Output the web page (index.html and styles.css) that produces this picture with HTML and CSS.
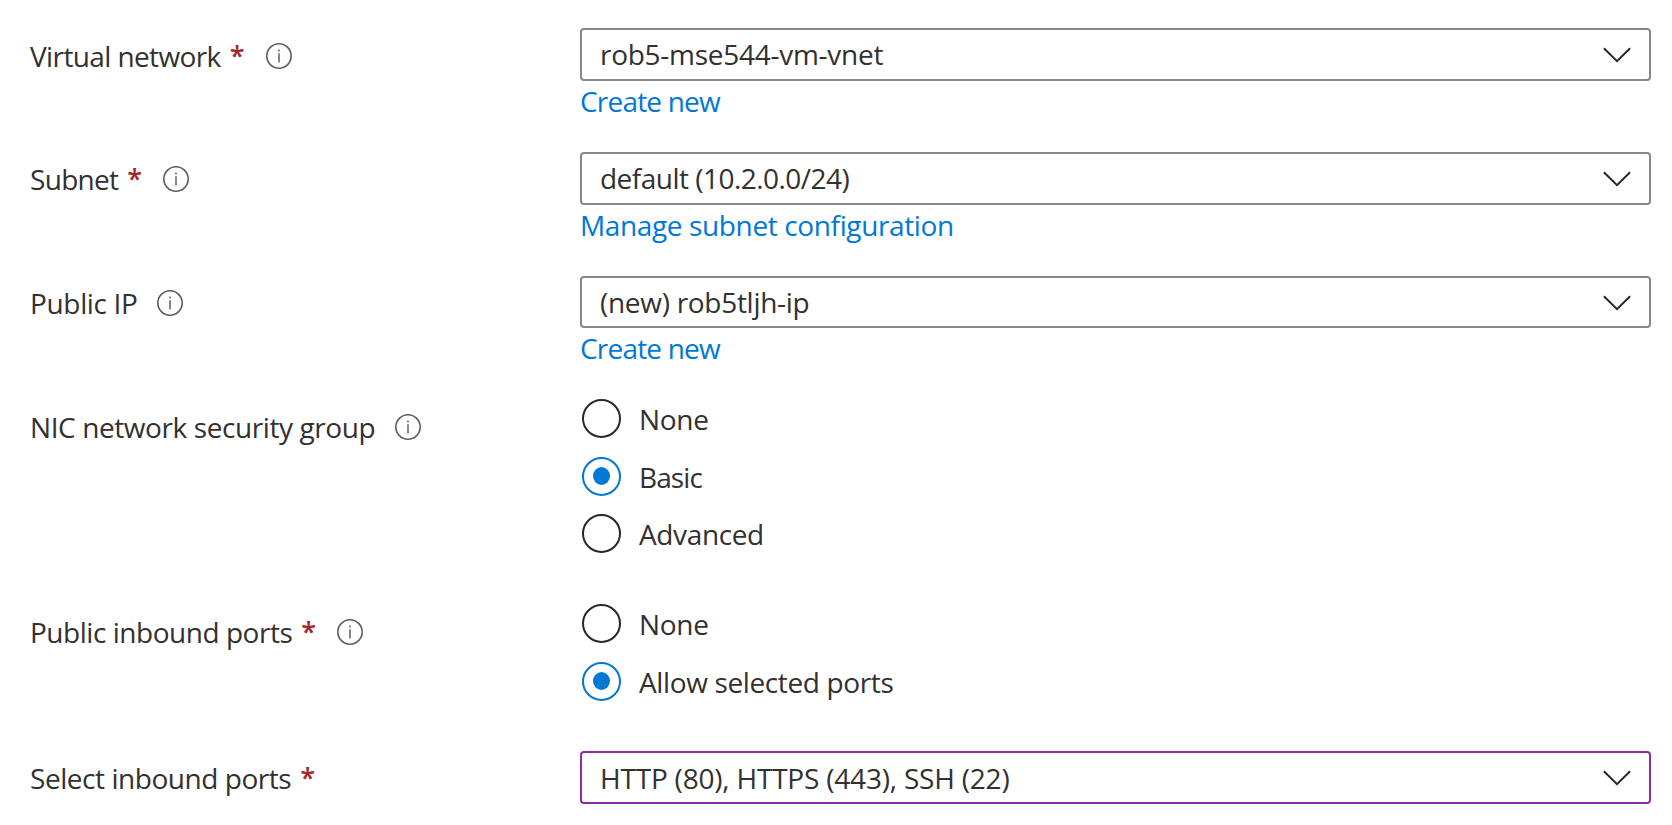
FILE: index.html
```
<!DOCTYPE html>
<html lang="en">
<head>
<meta charset="utf-8">
<title>Networking</title>
<link rel="stylesheet" href="styles.css">
</head>
<body>
<svg class="sprite" width="0" height="0">
  <symbol id="info" viewBox="0 0 26 26"><circle cx="13" cy="13" r="12.2" fill="none" stroke="#605e5c" stroke-width="1.6"/><path d="M13 10.2V19.4M13 6.6V8.4" stroke="#605e5c" stroke-width="1.5" fill="none"/></symbol>
  <symbol id="chevron" viewBox="0 0 28 16"><path d="M.9 1.2 14 14.1 27.1 1.2" fill="none" stroke="#292827" stroke-width="2"/></symbol>
</svg>
<form class="form">
  <div class="row row-vnet">
    <div class="label"><span class="text t-vnet">Virtual network</span><span class="star">*</span><svg class="info"><use href="#info"/></svg></div>
    <div class="field">
      <div class="select"><span class="text v-vnet">rob5-mse544-vm-vnet</span><svg class="chevron"><use href="#chevron"/></svg></div>
      <a class="link text l-create">Create new</a>
    </div>
  </div>
  <div class="row row-subnet">
    <div class="label"><span class="text t-subnet">Subnet</span><span class="star">*</span><svg class="info"><use href="#info"/></svg></div>
    <div class="field">
      <div class="select"><span class="text v-subnet">default (10.2.0.0/24)</span><svg class="chevron"><use href="#chevron"/></svg></div>
      <a class="link text l-manage">Manage subnet configuration</a>
    </div>
  </div>
  <div class="row row-ip">
    <div class="label"><span class="text t-ip">Public IP</span><svg class="info"><use href="#info"/></svg></div>
    <div class="field">
      <div class="select"><span class="text v-ip">(new) rob5tljh-ip</span><svg class="chevron"><use href="#chevron"/></svg></div>
      <a class="link text l-create">Create new</a>
    </div>
  </div>
  <div class="row row-nic">
    <div class="label"><span class="text t-nic">NIC network security group</span><svg class="info"><use href="#info"/></svg></div>
    <div class="field radios">
      <div class="option"><span class="radio"></span><span class="text o-none">None</span></div>
      <div class="option"><span class="radio checked"></span><span class="text o-basic">Basic</span></div>
      <div class="option"><span class="radio"></span><span class="text o-adv">Advanced</span></div>
    </div>
  </div>
  <div class="row row-public">
    <div class="label"><span class="text t-public">Public inbound ports</span><span class="star">*</span><svg class="info"><use href="#info"/></svg></div>
    <div class="field radios">
      <div class="option"><span class="radio"></span><span class="text o-none">None</span></div>
      <div class="option"><span class="radio checked"></span><span class="text o-allow">Allow selected ports</span></div>
    </div>
  </div>
  <div class="row row-select">
    <div class="label"><span class="text t-select">Select inbound ports</span><span class="star">*</span></div>
    <div class="field">
      <div class="select active"><span class="text v-ports">HTTP (80), HTTPS (443), SSH (22)</span><svg class="chevron"><use href="#chevron"/></svg></div>
    </div>
  </div>
</form>
</body>
</html>
```
FILE: styles.css
```
* { box-sizing: border-box; }
body {
  margin: 0;
  background: #fff;
  color: #323130;
  font-family: "Open Sans", "Noto Sans", sans-serif;
  font-size: 28px;
  line-height: 40px;
}
.sprite { position: absolute; }
.form { padding-top: 28px; }
.row {
  display: grid;
  grid-template-columns: 550px 1071px;
  padding-left: 30px;
}
.row-vnet, .row-subnet { height: 124px; }
.row-ip { height: 123px; }
.row-nic { height: 205px; }
.row-public { height: 147px; }
.label {
  display: flex;
  align-items: flex-start;
  padding-top: 8px;
}
.row-subnet .label, .row-ip .label, .row-select .label { padding-top: 7px; }
.text { white-space: nowrap; }

/* Tracking per string */
.t-vnet { letter-spacing: -.61px; }
.t-subnet { letter-spacing: -.7px; }
.t-ip { letter-spacing: -.34px; }
.t-nic { letter-spacing: -.41px; }
.t-public { letter-spacing: -.47px; }
.t-select { letter-spacing: -.45px; }
.v-vnet { letter-spacing: -.27px; }
.v-subnet { letter-spacing: -.52px; }
.v-ip { letter-spacing: -.29px; }
.v-ports { letter-spacing: -.2px; }
.l-create { letter-spacing: -.8px; }
.l-manage { letter-spacing: -.37px; }
.o-none { letter-spacing: -.3px; }
.o-basic { letter-spacing: -.9px; }
.o-adv, .o-allow { letter-spacing: -.37px; }

.star {
  width: 15px;
  margin-left: 9px;
  color: #a4262c;
  font-size: 27px;
  font-weight: 600;
}
.info {
  width: 26px;
  height: 26px;
  margin: 7px 0 0 19.5px;
}
.star + .info { margin-left: 21px; }
.select {
  display: flex;
  justify-content: space-between;
  height: 53px;
  padding: 4px 18px 0 18px;
  border: 2px solid #8a8886;
  border-radius: 4px;
}
.select.active {
  padding-top: 5px;
  border-color: #8a2da5;
}
.row-ip .select { height: 52px; }
.chevron {
  width: 28px;
  height: 16px;
  margin-top: 13px;
}
.active .chevron { margin-top: 12px; }
.link {
  display: block;
  width: max-content;
  color: #0078d4;
}
.radios { padding-left: 2px; }
.option {
  display: flex;
  gap: 18px;
  height: 57.5px;
}
.radio {
  display: grid;
  place-items: center;
  width: 39px;
  height: 39px;
  border: 2px solid #292827;
  border-radius: 50%;
}
.radio.checked { border-color: #0078d4; }
.radio.checked::after {
  content: "";
  width: 17px;
  height: 18px;
  border-radius: 50%;
  background: #0078d4;
}
```
